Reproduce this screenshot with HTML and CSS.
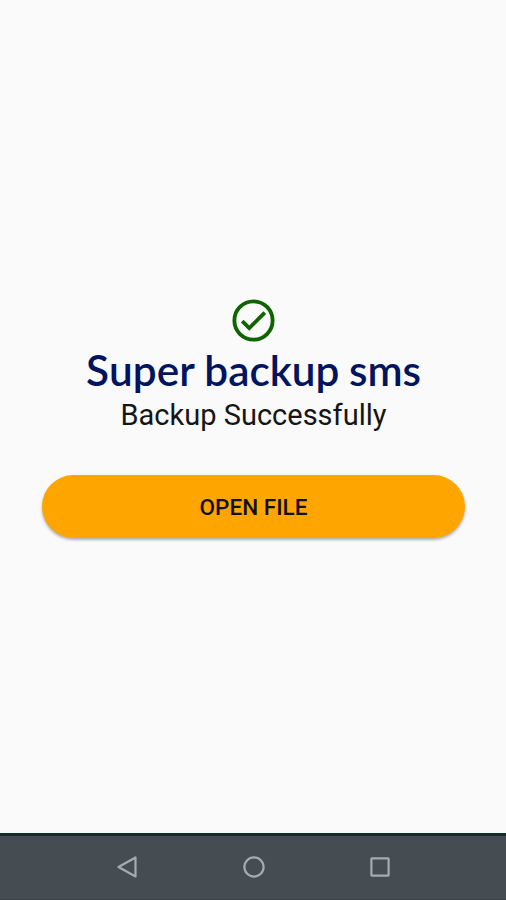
FILE: index.html
```html
<!DOCTYPE html>
<html lang="en">
<head>
  <meta charset="UTF-8">
  <title>Super backup sms</title>
  <link rel="stylesheet" href="styles.css">
</head>
<body>
  <div class="content">
    <svg class="check-icon" viewBox="0 0 24 24">
      <circle cx="12" cy="12" r="9"/>
      <path d="M6.7 12.3L10 15.6l7.3-7.3"/>
    </svg>
    <h1 class="title">Super backup sms</h1>
    <p class="message">Backup Successfully</p>
    <button class="btn-open">OPEN FILE</button>
  </div>

  <div class="navbar">
    <svg class="nav-icon" viewBox="0 0 24 24">
      <path d="M20.5 2.5v19L3.5 12z"/>
    </svg>
    <svg class="nav-icon" viewBox="0 0 24 24">
      <circle cx="12" cy="12" r="9.6"/>
    </svg>
    <svg class="nav-icon" viewBox="0 0 24 24">
      <rect x="3.4" y="3.4" width="17.2" height="17.2" rx="0.6"/>
    </svg>
  </div>
</body>
</html>
```

FILE: styles.css
```css
body {
  display: flex;
  flex-direction: column;
  height: 900px;
  margin: 0;
  background: #fafafa;
  font-family: Roboto, sans-serif;
  overflow: hidden;
}

.content {
  flex: 1;
  display: flex;
  flex-direction: column;
  align-items: center;
  padding: 295px 41px 0 42px;
}

.check-icon {
  width: 51px;
  height: 51px;
  fill: none;
  stroke: #0f6400;
  stroke-width: 1.8;
}

.title {
  margin: -1px 0 0;
  font-family: Lato, sans-serif;
  font-size: 42.3px;
  font-weight: 600;
  font-kerning: none;
  line-height: 50px;
  word-spacing: -1px;
  color: #00145f;
  white-space: nowrap;
}

.message {
  margin: 2px 0 0;
  font-size: 29px;
  line-height: 36px;
  color: #151515;
  white-space: nowrap;
}

.btn-open {
  width: 100%;
  height: 63px;
  margin-top: 42px;
  padding: 1px 0 0;
  border: none;
  border-radius: 32px;
  background: #ffa500;
  box-shadow: 0 2px 3px rgba(0,0,0,0.3);
  font-family: Roboto, sans-serif;
  font-size: 22.5px;
  font-weight: 500;
  color: #111;
}

.navbar {
  display: flex;
  justify-content: center;
  align-items: center;
  gap: 102.5px;
  height: 61px;
  padding: 0 0 2px 1px;
  border-top: 3px solid #142c2c;
  border-bottom: 1px solid #394347;
  background: #454d52;
}

.nav-icon {
  width: 24px;
  height: 24px;
  fill: none;
  stroke: #a5acae;
  stroke-width: 2.2;
  stroke-linejoin: round;
}
```
